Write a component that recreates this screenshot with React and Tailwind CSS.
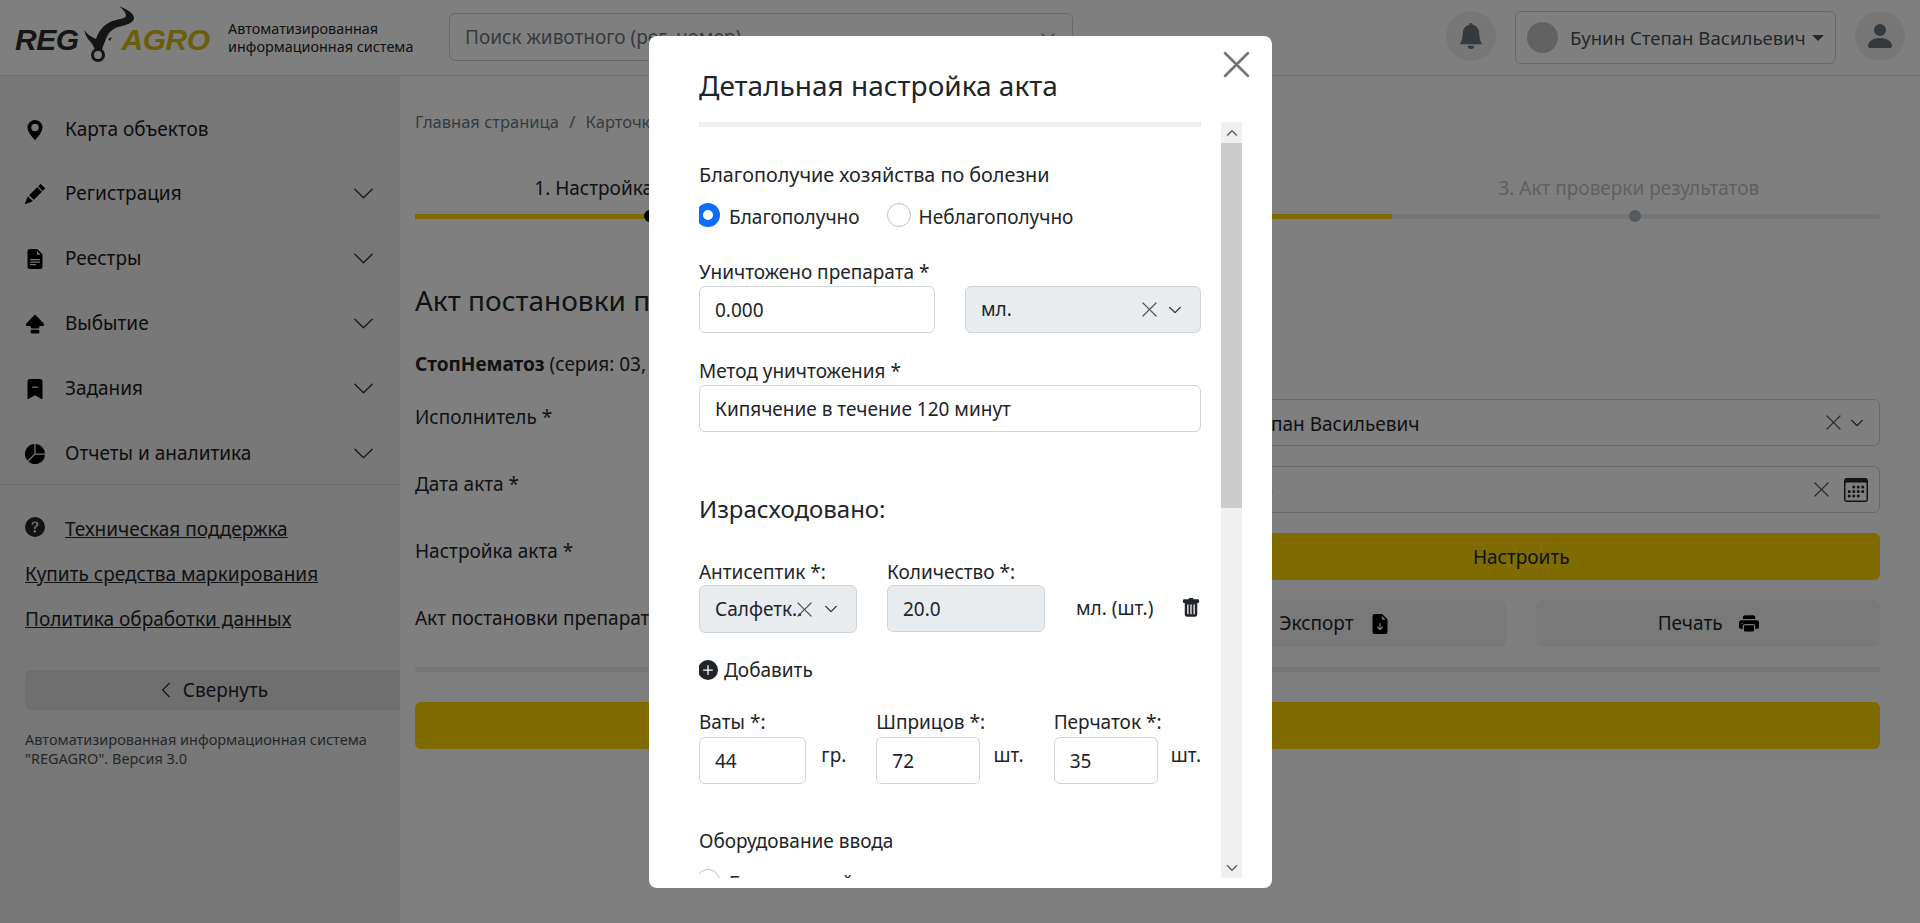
import {
  BsBellFill, BsBookmarkDashFill, BsCalendar3, BsCapslockFill, BsChevronDown, BsChevronLeft, BsChevronUp,
  BsFileEarmarkArrowDownFill, BsFileEarmarkTextFill, BsGeoAltFill, BsPencilFill, BsPersonFill, BsPieChartFill,
  BsPlusCircleFill, BsPrinterFill, BsQuestionCircleFill, BsTrashFill, BsXLg,
} from 'react-icons/bs';

const navItems = [
  { label: 'Карта объектов', icon: BsGeoAltFill, rowClass: 'h-[63px]' },
  { label: 'Регистрация', icon: BsPencilFill, arrow: true, rowClass: 'h-[65px]' },
  { label: 'Реестры', icon: BsFileEarmarkTextFill, arrow: true, rowClass: 'h-[65px]' },
  { label: 'Выбытие', icon: BsCapslockFill, arrow: true, rowClass: 'h-[65px]' },
  { label: 'Задания', icon: BsBookmarkDashFill, arrow: true, rowClass: 'h-[65px]' },
  { label: 'Отчеты и аналитика', icon: BsPieChartFill, arrow: true, rowClass: 'h-[65px]' },
];

const Logo = () => (
  <div className="flex w-[200px] items-start pl-[15px] font-['Liberation_Sans',sans-serif] text-[30px] font-bold italic leading-none tracking-[-0.5px]">
    <span className="mt-[19px] text-[#2d2d2d]">REG</span>
    <svg width="54" height="58" viewBox="0 0 54 58" className="ml-[3px] -mr-[14px] shrink-0">
      <path d="M37 0C44 3 52 7 52 12C52 17 44 19 36 21C30 23 26 27 24 33C22 38 20 42 20 44L13 44C12 40 9 36 6 33C4 30 3 27 2 24C5 28 9 31 14 33C16 27 20 20 28 16C35 13 43 13 44 10C44 7 41 3 37 0Z" fill="#2a2a2a" />
      <circle cx="16" cy="49" r="5.5" fill="none" stroke="#2a2a2a" strokeWidth="3" />
      <path d="M26 33l4-2-2 4z" fill="#2a2a2a" />
    </svg>
    <span className="mt-[19px] text-[#d9bb14]">AGRO</span>
  </div>
);

const Clear = () => <BsXLg size={19} className="shrink-0 text-[#495057]" />;

const Field = ({ value, className = 'bg-white' }) => (
  <input readOnly value={value} className={`h-[47px] rounded-md border border-[#ced4da] px-[15px] text-[19px] text-[#212529] ${className}`} />
);

const Radio = ({ checked, label, gapClass = 'gap-2', className = '' }) => (
  <div className={`flex items-center ${gapClass} ${className}`}>
    {checked ? (
      <span className="h-6 w-6 rounded-full border-[7px] border-[#0d6efd] bg-white" />
    ) : (
      <span className="h-6 w-6 rounded-full border border-[#bfbfbf] bg-white" />
    )}
    <span className="mt-1 leading-6">{label}</span>
  </div>
);

const QtyField = ({ label, value, unit, inputClass }) => (
  <div>
    <div className="whitespace-nowrap leading-6">{label}</div>
    <div className="mt-[3px] flex items-start justify-between">
      <Field value={value} className={inputClass} />
      <span className="mt-[6px] leading-6">{unit}</span>
    </div>
  </div>
);

export default function App() {
  return (
    <div className="relative h-[923px] overflow-hidden bg-white font-['Noto_Sans',sans-serif] text-[19px] text-[#212529]">
      <header className="flex h-[76px] items-start border-b border-[#dfdfdf] bg-white">
        <div className="mt-[6px]"><Logo /></div>
        <div className="mt-[20px] ml-[28px] w-[215px] text-[14.4px] leading-[18px]">Автоматизированная информационная система</div>
        <div className="mt-[13px] ml-[6px] flex h-12 w-[624px] items-center justify-between rounded-md border border-[#ced4da] pr-[16px] pl-[15px] text-[#6c757d]">
          <span>Поиск животного (рег. номер)</span>
          <BsChevronDown size={16} className="text-[#343a40]" />
        </div>
        <div className="mt-[11px] ml-auto flex h-[50px] w-[50px] items-center justify-center rounded-full bg-[#eeeeee]">
          <BsBellFill size={26} className="text-[#6b747c]" />
        </div>
        <div className="mt-[11px] ml-[19px] flex h-[53px] w-[321px] items-center rounded-md border border-[#ced4da] pr-[11px] pl-[11px] text-[18.6px] text-[#495057]">
          <span className="h-[31px] w-[31px] rounded-full bg-[#c4c4c4]" />
          <span className="ml-[12px] whitespace-nowrap">Бунин Степан Васильевич</span>
          <span className="ml-auto h-0 w-0 border-x-[6px] border-t-[6px] border-x-transparent border-t-[#495057]" />
        </div>
        <div className="mt-[11px] mr-[15px] ml-[19px] flex h-[50px] w-[50px] items-center justify-center rounded-full bg-[#eeeeee]">
          <BsPersonFill size={32} className="text-[#6b747c]" />
        </div>
      </header>

      <div className="flex h-[847px]">
        <aside className="w-[400px] shrink-0 bg-[#f0f0f0] pt-[22px]">
          {navItems.map(({ label, icon: Icon, arrow, rowClass }) => (
            <div key={label} className={`flex items-center pr-[25px] pl-[25px] ${rowClass}`}>
              <span className="flex w-[40px] justify-start"><Icon size={20} className="text-black" /></span>
              <span className="text-[#1a1a1a]">{label}</span>
              {arrow && <BsChevronDown size={23} className="ml-auto text-[#343a40]" />}
            </div>
          ))}
          <div className="-mt-[2px] border-t border-[#dfdfdf]" />
          <div className="mt-[32px] flex h-[45px] items-start pl-[25px] leading-6">
            <BsQuestionCircleFill size={20} className="mr-[20px] shrink-0 text-[#212529]" />
            <a className="text-[#212529] underline">Техническая поддержка</a>
          </div>
          <div className="flex h-[45px] items-start pl-[25px] leading-6"><a className="underline">Купить средства маркирования</a></div>
          <div className="flex h-[45px] items-start pl-[25px] leading-6"><a className="underline">Политика обработки данных</a></div>
          <div className="mt-[18px] ml-[25px] flex h-10 items-center justify-center gap-[8px] rounded-l-md bg-[#dedede]">
            <BsChevronLeft size={18} />
            <span>Свернуть</span>
          </div>
          <p className="mt-[20px] pl-[25px] text-[14.5px] leading-[19px] text-[#495057]">
            Автоматизированная информационная система<br />"REGAGRO". Версия 3.0
          </p>
        </aside>

        <main className="flex-1 pr-[40px] pl-[15px]">
          <div className="mt-[34px] h-6 text-[16.5px] leading-6 text-[#6c757d]">
            Главная страница <span className="mx-[6px]">/</span> Карточка препарата
          </div>
          <div className="mt-[42px] grid grid-cols-3 text-center leading-6">
            <span className="pl-[26px]">1. Настройка акта постановки</span>
            <span>2. Акт постановки</span>
            <span className="pr-[14px] text-[#c0c0c0]">3. Акт проверки результатов</span>
          </div>
          <div className="relative mt-[14px] h-[5px] rounded-full bg-[#e9ecef]">
            <div className="h-[5px] w-[977px] bg-[#ffd600]" />
            <span className="absolute top-[-4px] left-[229px] h-3 w-3 rounded-full bg-black" />
            <span className="absolute top-[-4px] left-[727px] h-3 w-3 rounded-full bg-black" />
            <span className="absolute top-[-4px] left-[1214px] h-3 w-3 rounded-full bg-[#adb5bd]" />
          </div>
          <h1 className="mt-[64px] text-[28px] leading-[34px]">Акт постановки препарата</h1>
          <p className="mt-[35px] leading-6"><b>СтопНематоз</b> (серия: 03, годен до 2025 г.)</p>

          <div className="mt-[23px] grid grid-cols-2 gap-x-[30px] gap-y-[20px]">
            <div className="pt-[6px] leading-6">Исполнитель *</div>
            <div className="flex h-[47px] items-center rounded-md border border-[#ced4da] pr-[15px] pl-[15px]">
              <span className="pt-[3px]">Бунин Степан Васильевич</span>
              <span className="ml-auto flex items-center gap-[7px]"><Clear /><BsChevronDown size={14} className="stroke-[0.6] text-[#343a40]" /></span>
            </div>
            <div className="pt-[6px] leading-6">Дата акта *</div>
            <div className="flex h-[47px] items-center rounded-md border border-[#ced4da] pr-[11px] pl-[15px]">
              <span className="text-[18.5px]">12.05.2023</span>
              <span className="ml-auto flex items-center gap-[13px]"><Clear /><BsCalendar3 size={24} /></span>
            </div>
            <div className="pt-[6px] leading-6">Настройка акта *</div>
            <button className="h-[47px] rounded-md bg-[#ffd600] pt-[2px]">Настроить</button>
            <div className="pt-[6px] leading-6">Акт постановки препарата</div>
            <div className="grid grid-cols-2 gap-[30px]">
              <button className="flex h-[47px] items-center justify-center gap-[16px] rounded-md bg-[#f3f3f3]">
                Экспорт <BsFileEarmarkArrowDownFill size={20} className="text-black" />
              </button>
              <button className="flex h-[47px] items-center justify-center gap-[16px] rounded-md bg-[#f3f3f3]">
                Печать <BsPrinterFill size={20} className="text-black" />
              </button>
            </div>
          </div>
          <div className="mt-[20px] h-[5px] bg-[#eeeeee]" />
          <button className="mt-[30px] block h-[47px] w-full rounded-md bg-[#ffd600]" />
        </main>
      </div>

      <div className="absolute inset-0 bg-black/50" />

      <div className="absolute top-[36px] left-[649px] h-[852px] w-[623px] rounded-lg bg-white pl-[50px]">
        <BsXLg size={33} className="absolute top-[12px] right-[19px] stroke-current stroke-[0.4] text-[#6f6f6f]" />
        <h2 className="mt-[30px] h-[56px] text-[28px] leading-[38px]">Детальная настройка акта</h2>

        <div className="flex h-[756px] gap-[20px]">
          <div className="h-full w-[502px] overflow-hidden">
            <div className="h-[5px] bg-[#eeeeee]" />
            <div className="mt-[36px] text-[19.8px] leading-6">Благополучие хозяйства по болезни</div>
            <div className="mt-[16px] -ml-[3px] flex h-6">
              <Radio checked label="Благополучно" gapClass="gap-[9px]" />
              <Radio label="Неблагополучно" className="ml-[27px]" />
            </div>

            <div className="mt-[33px] leading-6">Уничтожено препарата *</div>
            <div className="mt-[2px] flex justify-between">
              <Field value="0.000" className="w-[236px] bg-white" />
              <div className="flex h-[47px] w-[236px] items-center rounded-md border border-[#ced4da] bg-[#e9ecef] pr-[18px] pl-[15px]">
                <span>мл.</span>
                <span className="ml-auto flex items-center gap-[9px]"><Clear /><BsChevronDown size={14} className="stroke-[0.6] text-[#343a40]" /></span>
              </div>
            </div>

            <div className="mt-[26px] leading-6">Метод уничтожения *</div>
            <Field value="Кипячение в течение 120 минут" className="mt-[2px] w-full bg-white" />

            <div className="mt-[61px] text-[24px] leading-8">Израсходовано:</div>

            <div className="mt-[35px] flex items-start">
              <div className="w-[158px] shrink-0">
                <div className="leading-6">Антисептик *:</div>
                <div className="mt-[1px] flex h-[48px] items-center rounded-md border border-[#ced4da] bg-[#e9ecef] pr-[18px] pl-[15px]">
                  <span className="w-[80px] whitespace-nowrap">Салфетк..</span>
                  <Clear />
                  <BsChevronDown size={14} className="ml-auto shrink-0 stroke-[0.6] text-[#343a40]" />
                </div>
              </div>
              <div className="ml-[30px] w-[158px] shrink-0">
                <div className="leading-6">Количество *:</div>
                <Field value="20.0" className="mt-[1px] w-full bg-[#e9ecef]" />
              </div>
              <span className="mt-[36px] ml-[31px] whitespace-nowrap leading-6">мл. (шт.)</span>
              <BsTrashFill size={20} className="mt-[38px] ml-auto shrink-0 text-[#212529]" />
            </div>

            <div className="mt-[25px] flex h-6 items-center gap-[6px]">
              <BsPlusCircleFill size={20} className="-ml-[1px] text-[#212529]" />
              <span>Добавить</span>
            </div>

            <div className="mt-[28px] grid grid-cols-3 gap-[30px]">
              <QtyField label="Ваты *:" value="44" unit="гр." inputClass="w-[107px] bg-white" />
              <QtyField label="Шприцов *:" value="72" unit="шт." inputClass="w-[104px] bg-white" />
              <QtyField label="Перчаток *:" value="35" unit="шт." inputClass="w-[104px] bg-white" />
            </div>

            <div className="mt-[45px] leading-6">Оборудование ввода</div>
            <div className="mt-[16px] -ml-[3px] flex h-6">
              <Radio label="Безыгольный" gapClass="gap-[9px]" />
            </div>
          </div>

          <div className="flex h-full w-[21px] flex-col bg-[#f0f0f0]">
            <div className="flex h-[21px] items-center justify-center"><BsChevronUp size={12} className="stroke-1 text-[#505050]" /></div>
            <div className="h-[365px] bg-[#cdcdcd]" />
            <div className="mt-auto flex h-[21px] items-center justify-center"><BsChevronDown size={12} className="stroke-1 text-[#505050]" /></div>
          </div>
        </div>
      </div>
    </div>
  );
}
